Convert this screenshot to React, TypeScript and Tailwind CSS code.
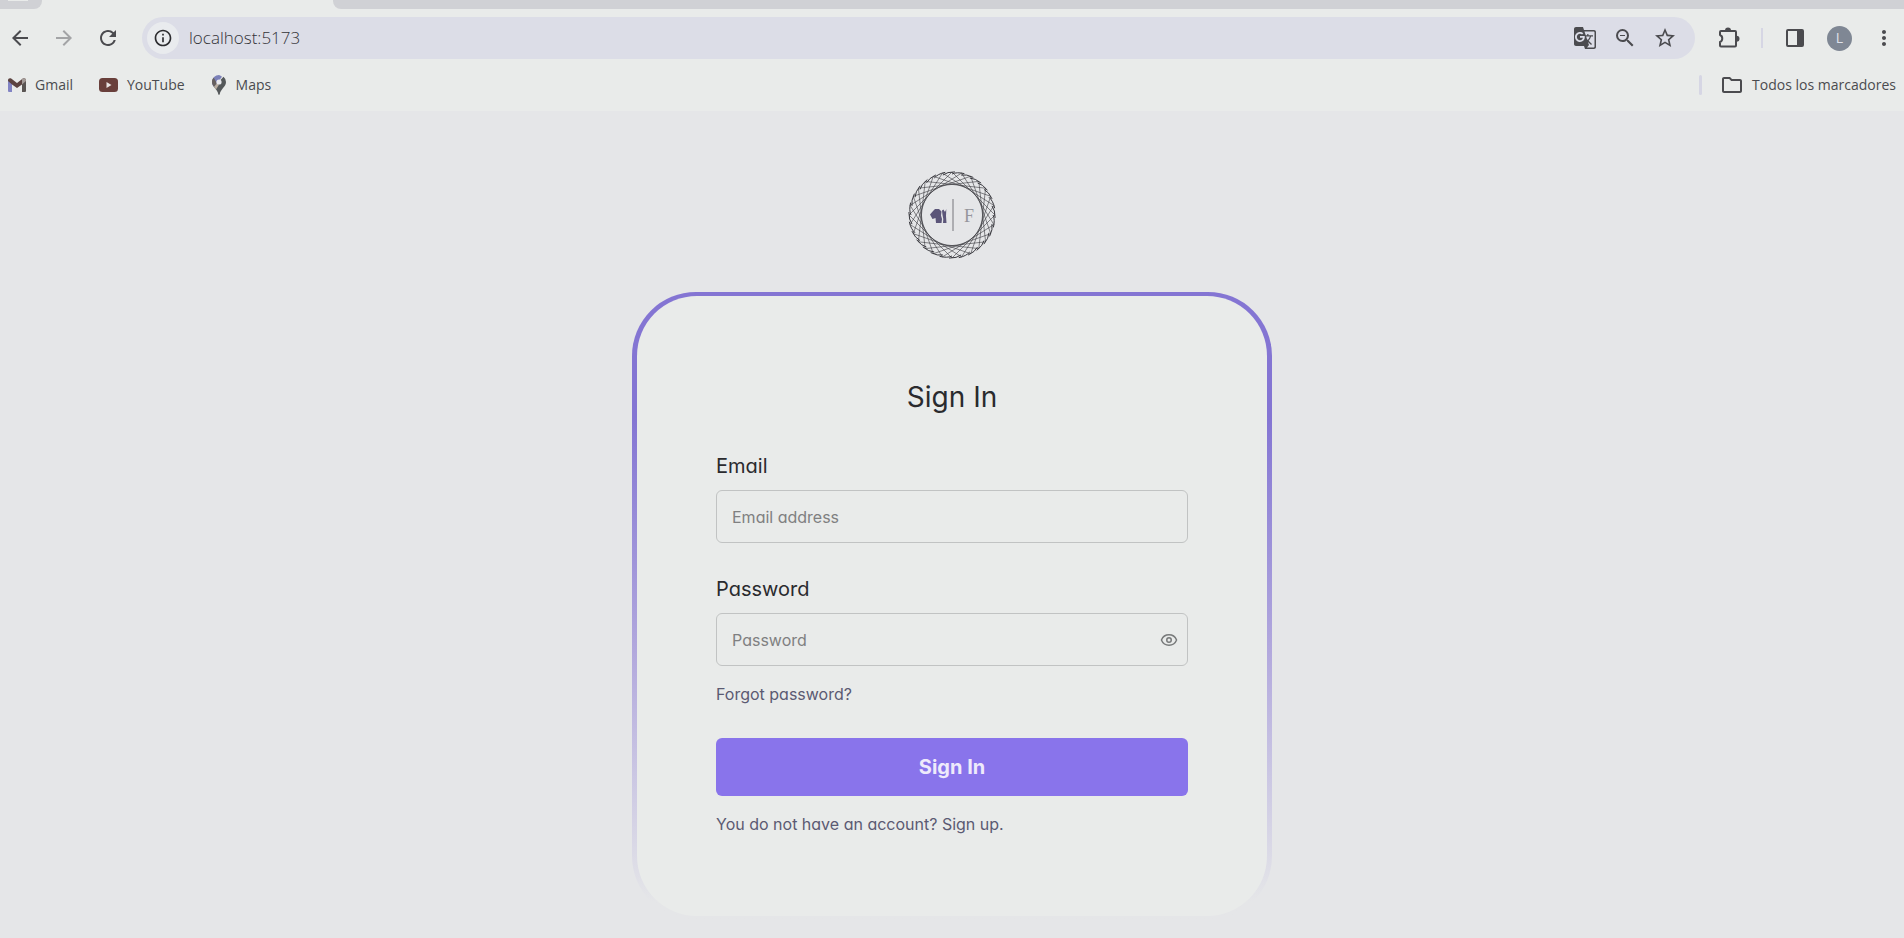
import { useState } from 'react'
import {
  MdArrowBack,
  MdArrowForward,
  MdGTranslate,
  MdInfoOutline,
  MdMoreVert,
  MdOutlineFolder,
  MdRefresh,
  MdStarBorder,
  MdZoomOut,
} from 'react-icons/md'
import { Eye } from 'lucide-react'

const bookmarks = [
  {
    name: 'Gmail',
    icon: (
      <svg width="18" height="14" viewBox="0 0 18 14">
        <path d="M0 2v11a1 1 0 001 1h3V5z" fill="#8284c4" />
        <path d="M18 2v11a1 1 0 01-1 1h-3V5z" fill="#5a5553" />
        <path d="M0 2.200C0 .4 1.800-.4 3.200.6L9 5l5.800-4.400C16.200-.4 18 .4 18 2.200V3l-4 3.400L9 10 4 6.400 0 3z" fill="#5c4341" />
        <path d="M14 1.200l.8-.6C16.200-.4 18 .4 18 2.200V3l-4 3.400z" fill="#a39b98" />
      </svg>
    ),
  },
  {
    name: 'YouTube',
    icon: (
      <svg width="19" height="14" viewBox="0 0 19 14">
        <rect width="19" height="14" rx="3.500" fill="#693f3b" />
        <path d="M7.500 4v6l5-3z" fill="#e9e4e3" />
      </svg>
    ),
  },
  {
    name: 'Maps',
    icon: (
      <svg width="16" height="20" viewBox="0 0 14 20">
        <path d="M7 0a7 7 0 00-7 7c0 2 .8 3.500 2 5l8-10.300A7 7 0 007 0z" fill="#7b80b8" />
        <path d="M11.500 1.700A7 7 0 0114 7c0 5-5.200 6.500-6.300 12.300-.1.700-1.300.7-1.400 0C5.900 16.500 4 14.500 2 12z" fill="#55595b" />
        <path d="M0 7c0 2 .8 3.500 2 5l3-3.700L1.600 2.600A7 7 0 000 7z" fill="#66605f" />
        <path d="M2 12l3-3.800 2 1.500-3 4.800z" fill="#b8aca0" />
        <circle cx="7" cy="7" r="2.600" fill="#e9e9ee" />
      </svg>
    ),
  },
]

const SPOKES = 28

function point(i: number, r: number) {
  const a = (i / SPOKES) * Math.PI * 2
  return `${(44 + Math.cos(a) * r).toFixed(2)} ${(44 + Math.sin(a) * r).toFixed(2)}`
}

function Logo() {
  const spokes = Array.from({ length: SPOKES }, (_, i) => i)
  return (
    <svg width="88" height="88" viewBox="0 0 88 88" fill="none" role="img" aria-label="Logo">
      <g stroke="#37373d">
        {spokes.map((i) => (
          <path key={i} strokeWidth="0.600" d={`M${point(i, 43)}L${point(i + 7, 43)}`} />
        ))}
        {spokes.map((i) => (
          <path key={i} strokeWidth="1" d={`M${point(i, 41)}Q${point(i + 0.5, 43.5)} ${point(i + 1.3, 43.2)}`} />
        ))}
        <circle cx="44" cy="44" r="31" strokeWidth="0.400" />
      </g>
      <path
        d="M22 43.500l3.500-4 1.500-1.500h4l2.500 2.500-.5 4 1 3.500-.5 4H28l-.5-5-3 1z"
        fill="#5b5579"
      />
      <path d="M34 39.500l1.500-1 1 2h.8l1-2.500-.3 7 .5 7h-3.500l.3-4-.8-4z" fill="#5b5579" />
      <path d="M45 28v32" stroke="#77777d" strokeWidth="1" />
      <text x="56" y="51" fontSize="18" fill="#96969c" className="font-['Liberation_Serif',serif]">
        F
      </text>
    </svg>
  )
}

function Browser() {
  return (
    <header className="bg-[#e9ebea] pb-2 font-['Open_Sans',sans-serif] text-[#4b4b4f]">
      <div className="flex h-[9px] gap-[291px]">
        <div className="w-[42px] rounded-br-lg bg-[#d0d1d5]">
          <div className="ml-2 h-px w-5 bg-[#e9ebea]" />
        </div>
        <div className="flex-1 rounded-bl-lg bg-[#d0d1d5]" />
      </div>

      {/* Toolbar */}
      <div className="flex items-center py-2 pr-2">
        <div className="flex w-[142px] items-center gap-5 pl-2">
          <button aria-label="Back"><MdArrowBack size={24} /></button>
          <button aria-label="Forward" className="text-[#a3a4a6]"><MdArrowForward size={24} /></button>
          <button aria-label="Reload"><MdRefresh size={24} /></button>
        </div>
        <div className="flex h-[42px] flex-1 items-center gap-4 rounded-full bg-[#dcdde7] pr-[18px] pl-[5px]">
          <button aria-label="Site information" className="flex size-8 items-center justify-center rounded-full bg-[#e9ebee] text-[#2c2c2f]">
            <MdInfoOutline size={20} />
          </button>
          <input
            aria-label="Address"
            defaultValue="localhost:5173"
            className="-ml-1.5 min-w-0 flex-1 bg-transparent text-[17px] font-light text-[#333338] outline-none"
          />
          <button aria-label="Translate"><MdGTranslate size={24} /></button>
          <button aria-label="Zoom"><MdZoomOut size={24} /></button>
          <button aria-label="Bookmark"><MdStarBorder size={24} /></button>
        </div>
        <div className="flex items-center pl-[22px]">
          <button aria-label="Extensions">
            <svg width="24" height="24" viewBox="0 0 24 24">
              <path
                d="M4 5h14a1 1 0 011 1v13.500a1 1 0 01-1 1H4a1 1 0 01-1-1V16c3-1 3-6 0-7V6a1 1 0 011-1z"
                fill="none"
                stroke="currentColor"
                strokeWidth="2"
                strokeLinejoin="round"
              />
              <path d="M8 4.500a3 3 0 016 0zM19.500 9.800a3 3 0 010 6z" fill="currentColor" />
            </svg>
          </button>
          <div className="mx-5 h-5 w-[2px] bg-[#d6d6e4]" />
          <button aria-label="Side panel">
            <svg width="24" height="24" viewBox="0 0 24 24">
              <rect x="4" y="4" width="16" height="16" rx="1" fill="none" stroke="currentColor" strokeWidth="2" />
              <path d="M14 4h6v16h-6z" fill="currentColor" />
            </svg>
          </button>
          <button aria-label="Profile" className="ml-5 size-[25px] rounded-full bg-[#7f8794] text-sm leading-6 text-[#dfe2ea]">
            L
          </button>
          <button aria-label="Menu" className="ml-5"><MdMoreVert size={24} /></button>
        </div>
      </div>

      {/* Bookmarks */}
      <div className="flex h-9 items-center justify-between px-2 text-sm">
        <nav className="flex items-center gap-[26px]">
          {bookmarks.map((b) => (
            <a key={b.name} href="#" className="flex items-center gap-[9px]">
              {b.icon}
              {b.name}
            </a>
          ))}
        </nav>
        <div className="flex items-center">
          <div className="mr-[18px] h-5 w-[3px] rounded-full bg-[#d6d6e4]" />
          <a href="#" className="flex items-center gap-2">
            <MdOutlineFolder size={24} />
            Todos los marcadores
          </a>
        </div>
      </div>
    </header>
  )
}

export default function App() {
  const [visible, setVisible] = useState(false)

  const inputClass =
    'h-[53px] w-full rounded-md border border-[#c1c3c3] bg-transparent px-[15px] text-base text-[#2a2a2e] outline-none placeholder:text-[#7f8081]'

  return (
    <div className="min-h-screen bg-[#e5e6e8]">
      <Browser />
      <main className="flex flex-col items-center pt-[60px] pb-4 font-[Inter,sans-serif] [font-feature-settings:'cv11']">
        <Logo />
        <div className="mt-[33px] w-full max-w-[640px] rounded-[64px] bg-linear-to-b from-[#8475d3] from-20% via-[#b2a8dd] via-57% to-[#e5e6e8] to-97% px-[5px] py-1">
          <form className="rounded-[60px] bg-[#e9ebea] px-[79px] py-20 text-[#2a2a2e]" onSubmit={(e) => e.preventDefault()}>
            <h1 className="text-center text-[28px] leading-[42px]">Sign In</h1>

            <label htmlFor="email" className="mt-[34px] mb-[10px] block text-xl leading-7">
              Email
            </label>
            <input id="email" type="email" placeholder="Email address" className={inputClass} />

            <label htmlFor="password" className="mt-8 mb-[10px] block text-xl leading-7">
              Password
            </label>
            <div className="relative">
              <input
                id="password"
                type={visible ? 'text' : 'password'}
                placeholder="Password"
                className={inputClass}
              />
              <button
                type="button"
                aria-label="Show password"
                onClick={() => setVisible(!visible)}
                className="absolute inset-y-0 right-[10px] text-[#77797a]"
              >
                <Eye size={18} />
              </button>
            </div>

            <a href="#" className="mt-4 block text-base text-[#5b5a72]">Forgot password?</a>
            <button className="mt-8 h-[58px] w-full rounded-md bg-[#8974eb] text-xl font-bold text-[#eeeafb]">
              Sign In
            </button>
            <p className="mt-4 text-base text-[#5b5a72]">
              You do not have an account? <a href="#">Sign up.</a>
            </p>
          </form>
        </div>
      </main>
    </div>
  )
}
